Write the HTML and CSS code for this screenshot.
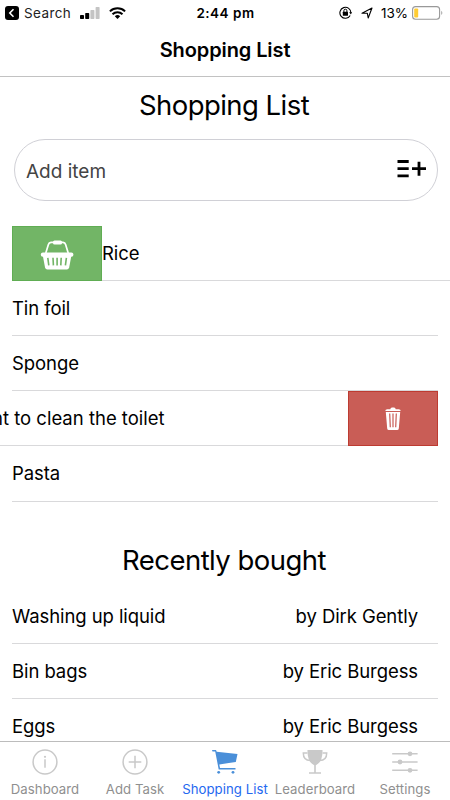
FILE: index.html
```html
<!DOCTYPE html>
<html lang="en">
<head>
<meta charset="utf-8">
<title>Shopping List</title>
<link rel="stylesheet" href="styles.css">
</head>
<body>
<div class="app">
  <header class="status">
    <div class="status-left">
      <svg width="14" height="14" viewBox="0 0 14 14"><rect width="14" height="14" rx="3"/><path d="M8.5 3.3 4.8 7l3.7 3.7" fill="none" stroke="#fff" stroke-width="1.6"/></svg>
      <span class="back-label">Search</span>
      <svg class="signal" width="20" height="12" viewBox="0 0 20 12"><rect y="8" width="4" height="4" rx=".7"/><rect x="5.2" y="6" width="4" height="6" rx=".7"/><rect x="10.4" y="3" width="4" height="9" rx=".7" fill="#c4c4c4"/><rect x="15.6" width="4" height="12" rx=".7" fill="#c4c4c4"/></svg>
      <svg class="wifi" width="17" height="12" viewBox="0 0 17 12"><path d="M.9 4.400a11 11 0 0 1 15.200 0M3.500 7.200a7.200 7.200 0 0 1 10 0" fill="none" stroke="#000" stroke-width="2"/><path d="M5.800 9.300a4 4 0 0 1 5.400 0L8.500 12z"/></svg>
    </div>
    <div class="time">2:44 pm</div>
    <div class="status-right">
      <svg width="13" height="13" viewBox="0 0 13 13"><path d="M11.200 9.500A5.500 5.500 0 1 1 11.900 7" fill="none" stroke="#000" stroke-width="1.100"/><path d="m10.100 6.300 1.800 2.200L13 6.300z"/><rect x="3.800" y="5.800" width="5.200" height="3.900" rx=".5"/><path d="M4.900 6V4.700a1.500 1.500 0 0 1 3 0V6" fill="none" stroke="#000"/></svg>
      <svg class="arrow" width="12" height="12" viewBox="0 0 12 12"><path d="M1 6.200 11 1 7.200 11 6.300 6.200z" fill="none" stroke="#000" stroke-width="1.100" stroke-linejoin="round"/></svg>
      <span class="percent">13%</span>
      <svg class="battery" width="31" height="14" viewBox="0 0 31 14"><rect x=".6" y=".6" width="27" height="12.600" rx="3" fill="none" stroke="#999" stroke-width="1.100"/><rect x="2.200" y="2.500" width="4" height="9" rx="1" fill="#fc3"/><path d="M29.300 4.800q2 2.100 0 4.300z" fill="#999"/></svg>
    </div>
  </header>
  <div class="navbar">Shopping List</div>
  <main class="content">
    <h1 class="title">Shopping List</h1>
    <div class="add-box">
      <span class="placeholder">Add item</span>
      <svg width="30" height="18" viewBox="0 0 30 18"><path d="M.5 1.500h11.200M.5 8.700h11.200M.5 15.900h11.200M15 8.700h14M22 1.700v14" fill="none" stroke="#000" stroke-width="2.800"/></svg>
    </div>
    <ul class="list">
      <li class="row row-bought">
        <span class="action action-buy">
          <svg width="34" height="30" viewBox="0 0 34 30"><path d="M5.800 13 8.400 4.500Q9 2.500 11 2.300h12q2 .2 2.600 2.200L28.200 13" fill="none" stroke="#fff" stroke-width="1.700"/><rect x="13" y=".5" width="9" height="4" rx="1.500" fill="#fff"/><rect x=".8" y="12.400" width="32.600" height="4.400" rx="2" fill="#fff"/><path d="M2.700 15h28.800l-2.300 12.200q-.5 2.200-2.400 2.200H7.400q-1.900 0-2.400-2.200z" fill="#fff"/><path d="m7.800 17.800 1 7.600M13 17.800l.4 7.600M17.100 17.800v7.600M21.200 17.800l-.4 7.600M26.400 17.800l-1 7.600" fill="none" stroke="#72b566" stroke-width="1.600"/></svg>
        </span>
        <span class="name">Rice</span>
      </li>
      <li class="row"><span class="name">Tin foil</span></li>
      <li class="row"><span class="name">Sponge</span></li>
      <li class="row row-delete">
        <span class="name">nt to clean the toilet</span>
        <span class="action action-delete">
          <svg width="16" height="24" viewBox="0 0 16 24"><path d="M.3 4q0-1.700 2-1.800h3Q5.500.5 7 .5h2q1.500 0 1.700 1.700h3q2 .1 2 1.800zM.8 5h14.400l-1.400 16.500q-.2 1.500-1.600 1.500H3.800q-1.400 0-1.600-1.500z" fill="#fff"/><path d="m4.700 6.500.6 13.700M8 6.500v13.700M11.300 6.500l-.6 13.700" fill="none" stroke="#c95d56" stroke-width="1.200"/></svg>
        </span>
      </li>
      <li class="row"><span class="name">Pasta</span></li>
    </ul>
    <h2 class="title title-recent">Recently bought</h2>
    <ul class="list">
      <li class="row"><span class="name">Washing up liquid</span><span class="by">by Dirk Gently</span></li>
      <li class="row"><span class="name">Bin bags</span><span class="by">by Eric Burgess</span></li>
      <li class="row"><span class="name">Eggs</span><span class="by">by Eric Burgess</span></li>
    </ul>
  </main>
  <nav class="tabs">
    <a class="tab"><svg width="28" height="28" viewBox="0 0 28 28"><circle cx="14" cy="14" r="11.900"/><path d="M14 11.300V19.800"/><circle class="solid" cx="14" cy="8.800" r="1.100"/></svg><span>Dashboard</span></a>
    <a class="tab"><svg width="28" height="28" viewBox="0 0 28 28"><circle cx="14" cy="14" r="11.900"/><path d="M14 7.700v12.600M7.700 14h12.600"/></svg><span>Add Task</span></a>
    <a class="tab tab-active"><svg width="28" height="28" viewBox="0 0 28 28"><path class="solid" d="M1 2h4l.7 1.800 20.800 2.200-1.700 7.900L8.300 16.400l.7 3.500h15.500v1.500H7.700L4.200 3.500H1.500z"/><circle class="solid" cx="7.700" cy="24.300" r="1.400"/><circle class="solid" cx="22" cy="24.300" r="1.400"/></svg><span>Shopping List</span></a>
    <a class="tab"><svg width="28" height="28" viewBox="0 0 28 28"><path class="solid" d="M6.500 2h15q.4 12-6.700 15.200v7h5.200v1.600H8v-1.600h5.200v-7Q6.100 14 6.500 2z"/><path d="M6.500 5H2.300q0 7.500 7 7.500M21.500 5h4.200q0 7.500-7 7.500"/></svg><span>Leaderboard</span></a>
    <a class="tab"><svg width="28" height="28" viewBox="0 0 28 28"><path d="M1.200 5.800h25.400M1.200 14h25.400M1.200 22.300h25.400"/><circle class="solid" cx="19" cy="5.800" r="2.400"/><circle class="solid" cx="9" cy="14" r="2.400"/><circle class="solid" cx="19" cy="22.300" r="2.400"/></svg><span>Settings</span></a>
  </nav>
</div>
</body>
</html>
```
FILE: styles.css
```css
* { box-sizing: border-box; }
body { margin: 0; background: #fff; color: #000; font-family: Inter, "Liberation Sans", sans-serif; }
svg { display: block; flex: none; }
.app { width: 450px; height: 800px; display: flex; flex-direction: column; overflow: hidden; }
.status { flex: none; height: 25px; display: grid; grid-template-columns: 1fr auto 1fr; align-items: center; padding: 0 7px 0 5px; font-size: 13.5px; }
.status-left, .status-right { display: flex; align-items: center; }
.status-right { justify-content: flex-end; }
.back-label { margin-left: 5px; letter-spacing: .4px; color: #222; }
.signal { margin-left: 9px; }
.wifi { margin-left: 9px; }
.time { font-weight: 600; letter-spacing: .5px; margin-left: 3px; }
.arrow { margin-left: 9px; }
.percent { margin-left: 8px; }
.battery { margin-left: 4px; }
.navbar { flex: none; height: 52px; border-bottom: 1px solid #c2c2c2; font-size: 20px; font-weight: 600; line-height: 50px; letter-spacing: -.1px; text-align: center; }
.content { flex: 1; min-height: 0; overflow: hidden; padding-top: 10px; }
.title { margin: 0; font-size: 27.5px; font-weight: 400; line-height: 36px; letter-spacing: -.55px; text-align: center; padding-right: 2px; }
.title-recent { margin-top: 40px; margin-bottom: 11px; padding-right: 2px; }
.add-box { height: 62px; margin: 16px 12px 24.600px 14px; padding: 0 10px 2px 11px; border: 1px solid #d0d0d6; border-radius: 31px; display: flex; align-items: center; justify-content: space-between; }
.placeholder { color: #444; font-size: 19px; padding-top: 4px; }
.list { list-style: none; margin: 0; padding: 0; font-size: 18.500px; letter-spacing: -.08px; }
.row { height: 55.200px; margin: 0 12px; border-bottom: 1px solid #d9d9db; display: flex; align-items: center; justify-content: space-between; }
.by { margin-right: 20px; }
.row-bought { margin-right: 0; justify-content: flex-start; }
.row-delete { margin-left: 0; }
.row-delete .name { margin-left: -8px; letter-spacing: 0; }
.action { width: 90px; height: 55px; flex: none; align-self: flex-start; display: flex; align-items: center; justify-content: center; }
.action-buy { background: #72b566; border: 1px solid #60ad53; padding-top: 3px; }
.action-delete { background: #c95d56; border: 1px solid #bd3b31; }
.tabs { flex: none; height: 59px; border-top: 1px solid #bcbcbc; display: grid; grid-template-columns: repeat(5, 1fr); background: #fff; }
.tab { display: flex; flex-direction: column; align-items: center; padding-top: 6px; color: #8f8f8f; font-size: 13.200px; line-height: 16px; letter-spacing: .05px; white-space: nowrap; }
.tab svg { fill: none; stroke: #c9c9c9; stroke-width: 1.5; }
.tab .solid { fill: #c9c9c9; stroke: none; }
.tab span { margin-top: 5px; }
.tab-active { color: #2469f0; }
.tab-active .solid { fill: #4a8fd9; }
```
